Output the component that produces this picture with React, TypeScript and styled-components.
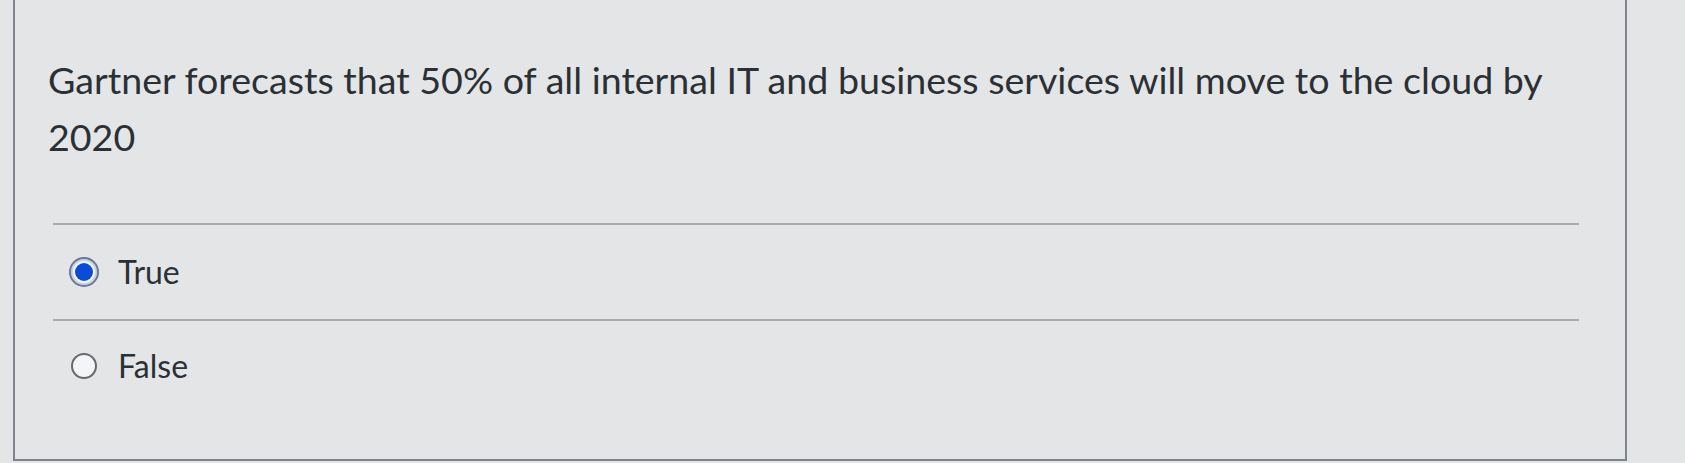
import React, { FC } from "react";
import styled, { createGlobalStyle } from "styled-components";

const GlobalStyle = createGlobalStyle`
  html, body {
    margin: 0;
    padding: 0;
    background: #e4e5e7;
  }
  body {
    font-family: Lato, "Open Sans", "Liberation Sans", sans-serif;
    color: #2b3035;
  }
`;

type Answer = { label: string; selected: boolean };

const answers: Answer[] = [
  { label: "True", selected: true },
  { label: "False", selected: false },
];

const App: FC = () => {
  return (
    <>
      <GlobalStyle />
      <Page>
        <QuestionBox>
          <QuestionText>
            Gartner forecasts that 50% of all internal IT and business services
            will move to the cloud by 2020
          </QuestionText>
          <AnswerList>
            {answers.map((a, i) => (
              <AnswerRow key={a.label} first={i === 0}>
                <Radio selected={a.selected}>{a.selected && <Dot />}</Radio>
                <AnswerLabel>{a.label}</AnswerLabel>
              </AnswerRow>
            ))}
          </AnswerList>
        </QuestionBox>
      </Page>
    </>
  );
};

export default App;

const Page = styled.div`
  width: 1685px;
  height: 463px;
  padding-left: 13px;
  box-sizing: border-box;
  overflow: hidden;
`;

const QuestionBox = styled.div`
  width: 1614px;
  height: 461px;
  box-sizing: border-box;
  border-left: 2px solid #7f848c;
  border-right: 2px solid #7f848c;
  border-bottom: 2px solid #7f848c;
  padding: 51px 46px 0 38px;
`;

const QuestionText = styled.p`
  margin: 0 0 0 -5px;
  font-size: 37.6px;
  line-height: 57px;
`;

const AnswerList = styled.div`
  margin-top: 58px;
`;

const AnswerRow = styled.label<{ first: boolean }>`
  display: flex;
  align-items: center;
  height: ${(p) => (p.first ? "96px" : "92px")};
  border-top: 2px solid #a6aaaf;
  padding-left: ${(p) => (p.first ? "16px" : "18px")};
  box-sizing: border-box;
`;

const Radio = styled.span<{ selected: boolean }>`
  display: inline-flex;
  align-items: center;
  justify-content: center;
  flex: none;
  width: ${(p) => (p.selected ? "30px" : "26px")};
  height: ${(p) => (p.selected ? "30px" : "26px")};
  border-radius: 50%;
  box-sizing: border-box;
  border: 2px solid ${(p) => (p.selected ? "#6a7796" : "#66696d")};
  background: #f4f5f7;
  box-shadow: ${(p) => (p.selected ? "inset 0 0 0 2px #c9d3ec" : "none")};
  margin-right: ${(p) => (p.selected ? "19px" : "21px")};
`;

const Dot = styled.span`
  width: 18px;
  height: 18px;
  border-radius: 50%;
  background: #0b4cd6;
`;

const AnswerLabel = styled.span`
  font-size: 32px;
  line-height: 40px;
`;
